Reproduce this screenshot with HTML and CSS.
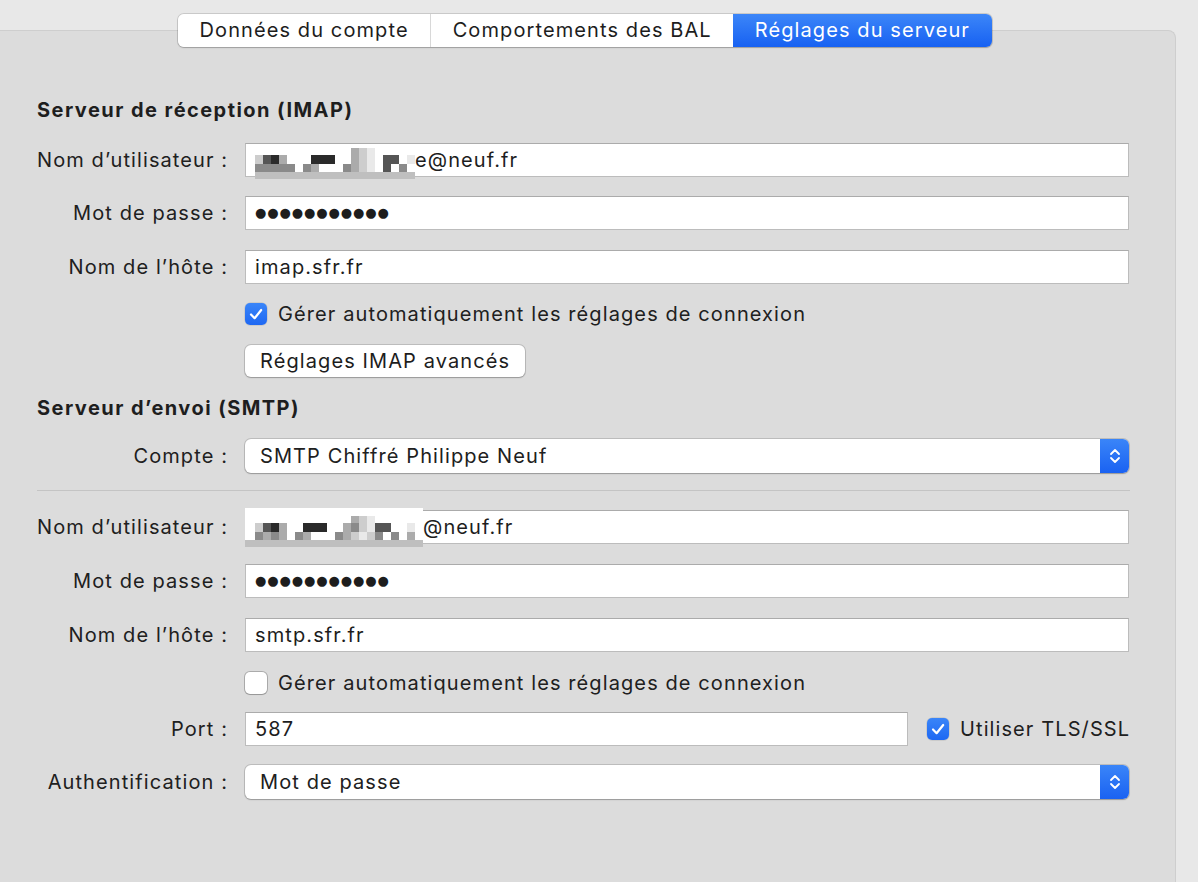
FILE: index.html
```html
<!DOCTYPE html>
<html lang="fr">
<head>
<meta charset="utf-8">
<title>Réglages du serveur</title>
<link rel="stylesheet" href="styles.css">
</head>
<body>
<div class="window">
  <div class="tabs">
    <div class="tab">Données du compte</div>
    <div class="tab">Comportements des BAL</div>
    <div class="tab active">Réglages du serveur</div>
  </div>
  <div class="panel">
    <h2 class="section">Serveur de réception (IMAP)</h2>

    <div class="row mt21">
      <label class="lbl">Nom d’utilisateur :</label>
      <div class="field">
        <div class="mosaic m1">
          <div class="grid">
            <span></span><span></span><span></span><span></span><span></span><span></span><span></span><span></span><span></span><span></span><span></span><span></span><span class="k4"></span><span class="k5"></span><span class="k6"></span><span></span><span></span><span></span><span></span><span></span>
            <span class="k5"></span><span class="k2"></span><span class="k1"></span><span class="k4"></span><span></span><span></span><span></span><span class="k1"></span><span class="k1"></span><span class="k1"></span><span></span><span></span><span class="k4"></span><span class="k5"></span><span class="k6"></span><span></span><span class="k2"></span><span class="k2"></span><span></span><span class="k6"></span>
            <span class="k3"></span><span class="k3"></span><span class="k3"></span><span class="k3"></span><span class="k3"></span><span></span><span class="k3"></span><span class="k4"></span><span></span><span></span><span></span><span class="k3"></span><span class="k4"></span><span class="k5"></span><span class="k6"></span><span></span><span class="k2"></span><span></span><span class="k3"></span><span></span>
          </div>
          <div class="strip"></div>
        </div>
        <span class="val off1">e@neuf.fr</span>
      </div>
    </div>

    <div class="row mt19">
      <label class="lbl">Mot de passe :</label>
      <div class="field"><span class="dots">●●●●●●●●●●●</span></div>
    </div>

    <div class="row mt20">
      <label class="lbl">Nom de l’hôte :</label>
      <div class="field"><span class="val">imap.sfr.fr</span></div>
    </div>

    <div class="check-row mt19">
      <span class="cb on"><svg viewBox="0 0 22 22" width="22" height="22"><path d="M6 11.5 L9.6 15.2 L16.2 7" fill="none" stroke="#fff" stroke-width="2.2" stroke-linecap="round" stroke-linejoin="round"/></svg></span>
      <span class="cb-label">Gérer automatiquement les réglages de connexion</span>
    </div>

    <div class="btn-row mt20">
      <button class="btn">Réglages IMAP avancés</button>
    </div>

    <h2 class="section mt19">Serveur d’envoi (SMTP)</h2>

    <div class="row mt19">
      <label class="lbl">Compte :</label>
      <div class="popup">
        <span class="popup-text">SMTP Chiffré Philippe Neuf</span>
        <span class="arrows"><svg viewBox="0 0 12 20" width="12" height="20"><path d="M2 8 L6 4 L10 8 M2 12 L6 16 L10 12" fill="none" stroke="#fff" stroke-width="1.8" stroke-linecap="round" stroke-linejoin="round"/></svg></span>
      </div>
    </div>

    <div class="divider"></div>

    <div class="row mt19">
      <label class="lbl">Nom d’utilisateur :</label>
      <div class="field">
        <div class="mosaic m2">
          <div class="grid">
            <span></span><span></span><span></span><span></span><span></span><span></span><span></span><span></span><span></span><span></span><span></span><span></span><span class="k4"></span><span class="k5"></span><span class="k6"></span><span></span><span></span><span></span><span></span><span></span>
            <span class="k5"></span><span class="k2"></span><span class="k1"></span><span class="k4"></span><span></span><span></span><span class="k1"></span><span class="k1"></span><span class="k1"></span><span></span><span></span><span class="k4"></span><span class="k3"></span><span class="k5"></span><span class="k6"></span><span class="k2"></span><span class="k2"></span><span></span><span></span><span class="k6"></span>
            <span class="k3"></span><span class="k4"></span><span class="k3"></span><span class="k4"></span><span></span><span class="k3"></span><span class="k4"></span><span></span><span></span><span></span><span class="k3"></span><span class="k4"></span><span class="k5"></span><span class="k6"></span><span class="k5"></span><span class="k3"></span><span></span><span class="k3"></span><span></span><span class="k4"></span>
          </div>
          <div class="strip"></div>
        </div>
        <span class="val off2">@neuf.fr</span>
      </div>
    </div>

    <div class="row mt20">
      <label class="lbl">Mot de passe :</label>
      <div class="field"><span class="dots">●●●●●●●●●●●</span></div>
    </div>

    <div class="row mt20">
      <label class="lbl">Nom de l’hôte :</label>
      <div class="field"><span class="val">smtp.sfr.fr</span></div>
    </div>

    <div class="check-row mt20">
      <span class="cb off"></span>
      <span class="cb-label">Gérer automatiquement les réglages de connexion</span>
    </div>

    <div class="row mt18">
      <label class="lbl">Port :</label>
      <div class="field port"><span class="val">587</span></div>
      <span class="cb on tls"><svg viewBox="0 0 22 22" width="22" height="22"><path d="M6 11.5 L9.6 15.2 L16.2 7" fill="none" stroke="#fff" stroke-width="2.2" stroke-linecap="round" stroke-linejoin="round"/></svg></span>
      <span class="cb-label">Utiliser TLS/SSL</span>
    </div>

    <div class="row mt19">
      <label class="lbl">Authentification :</label>
      <div class="popup">
        <span class="popup-text">Mot de passe</span>
        <span class="arrows"><svg viewBox="0 0 12 20" width="12" height="20"><path d="M2 8 L6 4 L10 8 M2 12 L6 16 L10 12" fill="none" stroke="#fff" stroke-width="1.8" stroke-linecap="round" stroke-linejoin="round"/></svg></span>
      </div>
    </div>
  </div>
</div>
</body>
</html>
```

FILE: styles.css
```css
* { box-sizing: border-box; }

html, body {
  margin: 0;
  padding: 0;
}

body {
  background: #e8e8e8;
  font-family: "Inter", "Liberation Sans", sans-serif;
  font-size: 20px;
  letter-spacing: 1.1px;
  color: #202020;
  width: 1198px;
  height: 882px;
  overflow: hidden;
}

.window {
  display: flex;
  flex-direction: column;
  height: 100%;
}

/* Segmented tabs */
.tabs {
  display: flex;
  width: max-content;
  margin: 14px 0 -17px 178px;
  position: relative;
  z-index: 2;
  border-radius: 6px;
  box-shadow: 0 0 0 1px rgba(0, 0, 0, 0.13), 0 1px 1.5px rgba(0, 0, 0, 0.18);
}

.tab {
  height: 33px;
  line-height: 33px;
  padding: 0 21.5px;
  background: #fff;
  color: #1d1d1d;
  white-space: nowrap;
}

.tab:first-child {
  border-radius: 6px 0 0 6px;
}

.tab + .tab {
  border-left: 1px solid #d8d8d8;
}

.tab.active {
  background: linear-gradient(#3c86f8, #1761f2);
  color: #fff;
  border-left: none;
  border-radius: 0 6px 6px 0;
}

/* Panel */
.panel {
  flex: 1;
  width: 1176px;
  background: #dcdcdc;
  border-top: 1px solid #cecece;
  border-right: 1px solid #cecece;
  border-top-right-radius: 8px;
  padding: 67px 46px 0 37px;
}

.section {
  margin: 0;
  font-size: 20px;
  font-weight: 700;
  letter-spacing: 1.45px;
  line-height: 24px;
  color: #1e1e1e;
}

.mt18 { margin-top: 18px; }
.mt19 { margin-top: 19px; }
.mt20 { margin-top: 20px; }
.mt21 { margin-top: 21px; }

.row {
  display: flex;
  align-items: center;
  height: 34px;
}

.lbl {
  width: 191px;
  margin-right: 17px;
  text-align: right;
  white-space: nowrap;
  flex: none;
}

.field {
  position: relative;
  flex: 1;
  height: 34px;
  background: #fff;
  border: 1px solid #bcbcbc;
  border-top-color: #ababab;
  padding-left: 9px;
  line-height: 32px;
  white-space: nowrap;
}

.field.port {
  flex: none;
  width: 663px;
}

.val {
  color: #1d1d1d;
}

.off1 { margin-left: 160px; }
.off2 { margin-left: 168px; }

.dots {
  font-family: "DejaVu Sans", sans-serif;
  font-size: 13px;
  letter-spacing: 0.9px;
  color: #1d1d1d;
  vertical-align: top;
}

/* pixelated redaction */
.mosaic {
  position: absolute;
  background: #fff;
  display: flex;
  flex-direction: column;
  justify-content: flex-end;
}

.mosaic.m1 {
  left: 9px;
  top: 4px;
  width: 160px;
  height: 31px;
}

.mosaic.m2 {
  left: -1px;
  top: -3px;
  width: 178px;
  height: 39px;
}

.mosaic.m2 .grid {
  padding-left: 10px;
}

.grid {
  display: grid;
  grid-template-columns: repeat(20, 8px);
  grid-template-rows: 7px 9px 8px;
}

.grid .k1 { background: #2a2a2a; }
.grid .k2 { background: #555; }
.grid .k3 { background: #8a8a8a; }
.grid .k4 { background: #ababab; }
.grid .k5 { background: #cdcdcd; }
.grid .k6 { background: #e9e9e9; }

.strip {
  height: 7px;
  background: #bfbfbf;
}

/* checkboxes */
.check-row {
  display: flex;
  align-items: center;
  height: 22px;
  padding-left: 208px;
}

.cb {
  flex: none;
  width: 22px;
  height: 22px;
  border-radius: 5px;
  display: inline-flex;
}

.cb.on {
  background: linear-gradient(#3a85f8, #1e68f3);
  box-shadow: 0 0 0 0.5px rgba(0, 0, 0, 0.15);
}

.cb.off {
  background: #fff;
  box-shadow: 0 0 0 1px rgba(0, 0, 0, 0.22), 0 1px 1px rgba(0, 0, 0, 0.12);
}

.cb-label {
  margin-left: 11px;
  white-space: nowrap;
}

.cb.tls {
  margin-left: 19px;
}

/* button */
.btn-row {
  padding-left: 208px;
  display: flex;
}

.btn {
  font: inherit;
  letter-spacing: inherit;
  color: #1d1d1d;
  height: 32px;
  padding: 0 15px;
  background: #fff;
  border: none;
  border-radius: 6px;
  box-shadow: 0 0 0 1px rgba(0, 0, 0, 0.14), 0 1px 1.5px rgba(0, 0, 0, 0.2);
  white-space: nowrap;
}

/* popup */
.popup {
  flex: 1;
  display: flex;
  height: 34px;
  border-radius: 6px;
  background: #fff;
  box-shadow: 0 0 0 1px rgba(0, 0, 0, 0.14), 0 1px 1.5px rgba(0, 0, 0, 0.2);
}

.popup-text {
  flex: 1;
  padding-left: 15px;
  line-height: 34px;
  white-space: nowrap;
}

.arrows {
  width: 29px;
  display: flex;
  align-items: center;
  justify-content: center;
  background: linear-gradient(#3a85f8, #1a62f2);
  border-radius: 0 6px 6px 0;
}

.divider {
  margin-top: 17px;
  height: 1px;
  width: 1093px;
  background: #c4c4c4;
}
```
